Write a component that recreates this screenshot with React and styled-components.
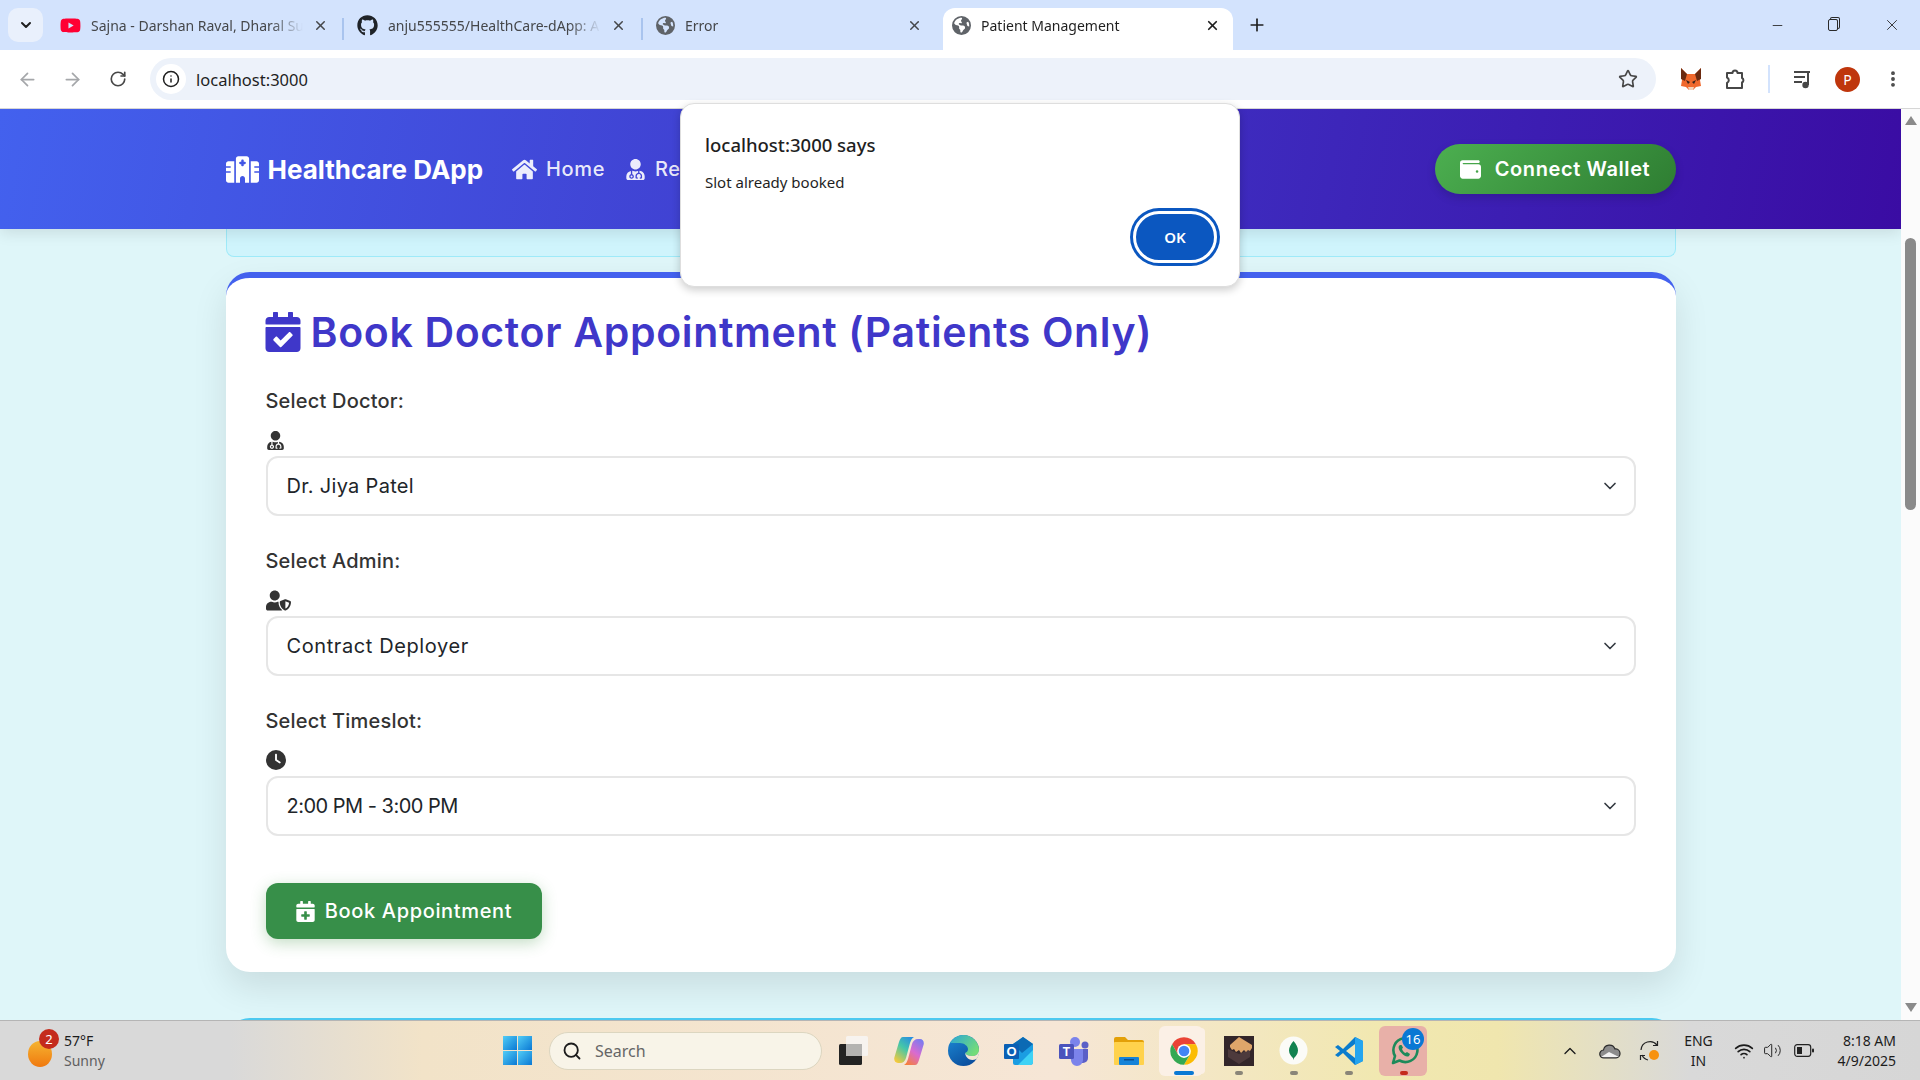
import React from "react";
import styled, { createGlobalStyle } from "styled-components";
import { ArrowLeft, ArrowRight, RotateCw, Info, Star, X, Plus, Minus, ChevronDown, ChevronUp, Search, EllipsisVertical, Wifi, Volume2 } from "lucide-react";
import { FaGithub, FaUserMd, FaUserShield, FaCalendarCheck, FaCalendarPlus, FaHome, FaYoutube } from "react-icons/fa";
import { FaHospital, FaClock, FaWallet, FaEarthAmericas } from "react-icons/fa6";

const POPPINS = `"Inter", "Liberation Sans", sans-serif`;
const SEGOE = `"Noto Sans", "Open Sans", sans-serif`;

const GlobalStyle = createGlobalStyle`
  html, body { margin: 0; padding: 0; width: 1920px; height: 1080px; overflow: hidden; }
  * { box-sizing: border-box; }
`;

const Screen = styled.div`
  position: relative;
  width: 1920px;
  height: 1080px;
  display: flex;
  flex-direction: column;
  overflow: hidden;
  font-family: ${SEGOE};
`;

/* browser chrome */
const TabStrip = styled.div`
  height: 50px;
  background: #d3e3fd;
  display: flex;
  align-items: flex-end;
  padding-left: 8px;
  flex-shrink: 0;
`;

const TabSearch = styled.div`
  width: 35px;
  height: 34px;
  margin: 0 4px 8px 0;
  border-radius: 10px;
  background: #e9f0fc;
  color: #1f1f1f;
  display: flex;
  align-items: center;
  justify-content: center;
`;

const Tab = styled.div`
  position: relative;
  width: ${({ $width }) => $width}px;
  height: 42px;
  display: flex;
  align-items: center;
  gap: 10px;
  padding: 0 ${({ $closeGap }) => $closeGap}px 8px ${({ $active }) => ($active ? 9 : 13)}px;
  color: ${({ $active }) => ($active ? "#1f1f1f" : "#45474a")};
  background: ${({ $active }) => ($active ? "#fff" : "transparent")};
  border-radius: 12px 12px 0 0;

  &::after {
    content: "";
    position: absolute;
    right: 0;
    top: 10px;
    height: 22px;
    width: 2px;
    background: ${({ $sep }) => ($sep ? "#a9c4ee" : "transparent")};
  }
`;

const TabTitle = styled.span`
  flex: 1;
  font-size: 14px;
  white-space: nowrap;
  overflow: hidden;
  mask-image: linear-gradient(to right, #000 85%, transparent 100%);
`;

const NewTab = styled.div`
  width: 36px;
  height: 42px;
  margin-left: 6px;
  padding-bottom: 8px;
  display: flex;
  align-items: center;
  justify-content: center;
  color: #1f1f1f;
`;

const WindowControls = styled.div`
  margin-left: auto;
  height: 50px;
  display: flex;
  align-items: center;
  color: #2a2a2a;
`;

const WindowButton = styled.div`
  width: 57px;
  height: 50px;
  display: flex;
  align-items: center;
  justify-content: center;
`;

const RestoreGlyph = styled.div`
  width: 10px;
  height: 12px;
  margin-right: 4px;
  border: 1.4px solid #2a2a2a;
  border-radius: 2px;
  box-shadow: 2px -2px 0 -1px #d3e3fd, 2px -2px 0 0 #2a2a2a;
`;

const Toolbar = styled.div`
  height: 59px;
  background: #fff;
  border-bottom: 1px solid #d6d6d6;
  border-radius: 12px 12px 0 0;
  display: flex;
  align-items: center;
  padding: 0 5px 0 5px;
  flex-shrink: 0;
`;

const ToolCell = styled.div`
  width: 45px;
  height: 42px;
  display: flex;
  align-items: center;
  justify-content: center;
  color: ${({ $dim }) => ($dim ? "#a5a7aa" : "#474747")};
  flex-shrink: 0;
`;

const UrlBar = styled.div`
  flex: 1;
  height: 42px;
  margin: 0 12px 0 10px;
  padding: 0 18px 0 6px;
  background: #edf2fa;
  border-radius: 21px;
  display: flex;
  align-items: center;
`;

const InfoBubble = styled.div`
  width: 30px;
  height: 30px;
  border-radius: 50%;
  background: #fff;
  color: #1f1f1f;
  display: flex;
  align-items: center;
  justify-content: center;
`;

const UrlText = styled.span`
  margin-left: 10px;
  flex: 1;
  font-size: 16.5px;
  color: #1f1f1f;
`;

const ToolSep = styled.div`
  width: 2px;
  height: 28px;
  margin: 0 10px;
  background: #d3e3fd;
`;

const Avatar = styled.div`
  width: 25px;
  height: 25px;
  border-radius: 50%;
  background: #bf360c;
  color: #fff;
  font-size: 14px;
  display: flex;
  align-items: center;
  justify-content: center;
`;

/* page */
const Viewport = styled.div`
  flex: 1;
  min-height: 0;
  display: flex;
`;

const Page = styled.main`
  flex: 1;
  min-width: 0;
  overflow: hidden;
  background: #dff6f9;
`;

const Scrollbar = styled.div`
  width: 19px;
  background: #fbfbfb;
  display: flex;
  flex-direction: column;
  align-items: center;
  padding: 7px 0 8px;
`;

const ScrollThumb = styled.div`
  width: 11px;
  height: 272px;
  margin: 113px 0 auto;
  border-radius: 6px;
  background: #8a8a8a;
`;

const Arrow = styled.div`
  width: 0;
  height: 0;
  border-left: 6px solid transparent;
  border-right: 6px solid transparent;
  ${({ $down }) =>
    $down ? "border-top: 9px solid #8a8a8a;" : "border-bottom: 9px solid #8a8a8a;"}
`;

const Navbar = styled.header`
  height: 120px;
  background: linear-gradient(100deg, #4361ee 0%, #3f37c9 50%, #3a0ca3 100%);
  box-shadow: 0 4px 14px rgba(0, 0, 0, 0.1);
  position: relative;
`;

const Container = styled.div`
  width: 1450px;
  margin: 0 auto;
`;

const NavInner = styled(Container)`
  height: 100%;
  display: flex;
  align-items: center;
`;

const Brand = styled.div`
  display: flex;
  align-items: center;
  gap: 9px;
  color: #fff;
  font-family: ${POPPINS};
  font-weight: 700;
  font-size: 26px;
  letter-spacing: 0;
  margin-right: 29px;
`;

const NavLink = styled.a`
  display: flex;
  align-items: center;
  gap: 9px;
  margin-right: 20px;
  color: rgba(255, 255, 255, 0.9);
  font-family: ${POPPINS};
  font-weight: 500;
  font-size: 20px;
  letter-spacing: 0.6px;
`;

const WalletButton = styled.button`
  margin-left: auto;
  width: 241px;
  height: 50px;
  border: none;
  border-radius: 25px;
  background: linear-gradient(135deg, #4caf50, #2e7d32);
  box-shadow: 0 4px 10px rgba(0, 0, 0, 0.15);
  color: #fff;
  font-family: ${POPPINS};
  font-weight: 600;
  font-size: 20px;
  letter-spacing: 0.6px;
  display: flex;
  align-items: center;
  justify-content: center;
  gap: 14px;
`;

const Alert = styled(Container)`
  height: 28px;
  background: #cff4fc;
  border: 1px solid #9eeaf9;
  border-top: none;
  border-radius: 0 0 8px 8px;
  margin-bottom: 15px;
`;

const Card = styled(Container)`
  height: 700px;
  padding: 28px 40px 33px;
  background: #fff;
  border-top: 6px solid #4361ee;
  border-radius: 24px;
  box-shadow: 0 15px 35px rgba(0, 0, 0, 0.1);
`;

const NextCard = styled(Container)`
  height: 40px;
  margin-top: 46px;
  background: #fff;
  border-top: 4px solid #4cc9f0;
  border-radius: 24px 24px 0 0;
`;

const Title = styled.h2`
  margin: 0 0 24px;
  height: 52px;
  display: flex;
  align-items: center;
  gap: 8px;
  color: #3f37c9;
  font-family: ${POPPINS};
  font-weight: 600;
  font-size: 41px;
  letter-spacing: 0.66px;
  white-space: nowrap;
`;

const TitleIcon = styled(FaCalendarCheck)`
  margin-left: -3px;
`;

const Field = styled.div`
  margin-bottom: 26px;
`;

const Label = styled.label`
  display: block;
  height: 38px;
  line-height: 38px;
  margin-bottom: 7px;
  color: #333;
  font-family: ${POPPINS};
  font-weight: 500;
  font-size: 20px;
  letter-spacing: 0.2px;
`;

const FieldIcon = styled.div`
  height: 29px;
  padding-bottom: 3px;
  display: flex;
  align-items: center;
  color: #333;
`;

const SelectWrap = styled.div`
  position: relative;
`;

const Select = styled.select`
  display: block;
  width: 100%;
  height: 60px;
  padding: 0 19px;
  appearance: none;
  background: #fff;
  border: 2px solid #e6e6e6;
  border-radius: 12px;
  color: #212529;
  font-family: ${POPPINS};
  font-size: 20px;
  letter-spacing: ${({ $spacing }) => $spacing}px;
`;

const Chevron = styled(ChevronDown)`
  position: absolute;
  right: 16px;
  top: 20px;
  color: #343a40;
  pointer-events: none;
`;

const BookButton = styled.button`
  margin-top: 47px;
  width: 276px;
  height: 56px;
  border: none;
  border-radius: 12px;
  background: #378f49;
  box-shadow: 0 4px 15px rgba(56, 142, 60, 0.3);
  color: #fff;
  font-family: ${POPPINS};
  font-weight: 500;
  font-size: 20px;
  letter-spacing: 0.65px;
  display: flex;
  align-items: center;
  justify-content: center;
  gap: 9px;
`;

/* alert() dialog */
const Dialog = styled.div`
  position: absolute;
  left: 680px;
  top: 103px;
  width: 560px;
  height: 184px;
  padding: 29px 23px 20px 24px;
  background: #fff;
  border: 1px solid #dedede;
  border-radius: 14px;
  box-shadow: 0 3px 8px rgba(0, 0, 0, 0.2);
  display: flex;
  flex-direction: column;
`;

const DialogTitle = styled.div`
  font-size: 18.5px;
  line-height: 24px;
  font-weight: 500;
  color: #1f1f1f;
`;

const DialogText = styled.div`
  margin-top: 15px;
  font-size: 15px;
  line-height: 20px;
  color: #1f1f1f;
`;

const DialogOk = styled.button`
  position: relative;
  margin: auto -4px 0 auto;
  width: 90px;
  height: 58px;
  padding: 0;
  border: none;
  border-radius: 29px;
  background: #0b57c0;
  color: #fff;
  font-family: ${SEGOE};
  font-size: 15px;
  font-weight: 600;

  &::after {
    content: "";
    position: absolute;
    inset: 3px;
    border-radius: 26px;
    border: 3px solid #fff;
  }
`;

/* windows taskbar */
const Taskbar = styled.footer`
  position: relative;
  height: 60px;
  flex-shrink: 0;
  display: flex;
  align-items: center;
  border-top: 1px solid #b5b5b5;
  background: linear-gradient(90deg, #d9d9d9 0%, #d9d9d9 12%, #f2e3c8 22%, #f6e6d6 55%, #f1e8b0 72%, #f0e6ae 78%, #d9d9d9 88%, #d6d6d6 100%);
  color: #1c1c1c;
`;

const Weather = styled.div`
  position: relative;
  width: 503px;
  padding-left: 64px;
  font-size: 14px;
  line-height: 20px;
  flex-shrink: 0;
`;

const Sunny = styled.div`
  color: #5f5f5f;
`;

const Sun = styled.div`
  position: absolute;
  left: 28px;
  top: 10px;
  width: 24px;
  height: 26px;
  border-radius: 50%;
  background: linear-gradient(180deg, #f5b431, #f0790f);
`;

const Badge = styled.div`
  position: absolute;
  left: ${({ $left }) => $left}px;
  top: ${({ $top }) => $top}px;
  width: ${({ $size }) => $size}px;
  height: ${({ $size }) => $size}px;
  border-radius: 50%;
  background: ${({ $color }) => $color};
  color: #fff;
  font-size: 13px;
  display: flex;
  align-items: center;
  justify-content: center;
`;

const SearchBox = styled.div`
  width: 273px;
  height: 38px;
  margin-left: 17px;
  padding-left: 12px;
  border-radius: 19px;
  background: #f8f4e8;
  border: 1px solid #dcd6c0;
  display: flex;
  align-items: center;
  gap: 13px;
  color: #666;
  font-size: 16px;
`;

const Apps = styled.div`
  display: flex;
  margin-left: 4px;
`;

const AppCell = styled.div`
  position: relative;
  width: 55px;
  height: 50px;
  display: flex;
  align-items: center;
  justify-content: center;

  &::before {
    content: "";
    position: absolute;
    top: 0;
    bottom: 0;
    left: 3px;
    right: ${({ $stack }) => ($stack ? 8 : 4)}px;
    border-radius: 6px;
    background: ${({ $tile }) => $tile || "transparent"};
    box-shadow: ${({ $stack }) => ($stack ? "4px 0 0 -2px #fbf0e6" : "none")};
  }

  & > svg {
    position: relative;
  }
`;

const Pip = styled.div`
  position: absolute;
  bottom: 1px;
  left: 50%;
  transform: translateX(-50%);
  width: ${({ $w }) => $w}px;
  height: 4px;
  border-radius: 2px;
  background: ${({ $color }) => $color};
`;

const Tray = styled.div`
  margin-left: auto;
  display: flex;
  align-items: center;
  padding-right: 24px;
  color: #1c1c1c;
`;

const TrayCell = styled.div`
  width: ${({ $w }) => $w || 40}px;
  display: flex;
  align-items: center;
  justify-content: center;
`;

const LangBox = styled.div`
  width: 57px;
  text-align: center;
  font-size: 14px;
  line-height: 20px;
`;

const Clock = styled.div`
  width: 71px;
  text-align: right;
  font-size: 14px;
  line-height: 20px;
`;

const ChromeLogo = ({ size }) => (
  <svg width={size} height={size} viewBox="0 0 48 48">
    <path d="M4.95 13A22 22 0 0 1 43.05 13H24L14.47 29.5z" fill="#ea4335" />
    <path d="M4.95 13A22 22 0 0 1 43.05 13H24L14.47 29.5z" fill="#fbbc04" transform="rotate(120 24 24)" />
    <path d="M4.95 13A22 22 0 0 1 43.05 13H24L14.47 29.5z" fill="#34a853" transform="rotate(240 24 24)" />
    <circle cx="24" cy="24" r="11" fill="#fff" />
    <circle cx="24" cy="24" r="8.5" fill="#4285f4" />
  </svg>
);

const Fox = () => (
  <svg width="22" height="24" viewBox="0 0 22 24">
    <path d="M1 1l6 6h8l6-6-1 12 1 6-5 1-3 3h-4l-3-3-5-1 1-6z" fill="#f0682c" />
    <path d="M1 1l6 6-2 7-4-2zM21 1l-6 6 2 7 4-2z" fill="#6b2a10" />
    <path d="M6 13l4 2-2 2zM16 13l-4 2 2 2z" fill="#33201a" />
    <path d="M8 20h6l-1 3H9z" fill="#f6d2b8" />
  </svg>
);

const ExtensionGlyph = () => (
  <svg width="22" height="22" viewBox="0 0 22 22" fill="none" stroke="#474747" strokeWidth="2" strokeLinejoin="round">
    <path d="M2 5h5.500a2.500 2.500 0 0 1 5 0H17v5a2.500 2.500 0 0 1 0 4.500V20H2v-5a3 3 0 0 0 0-5.500z" />
  </svg>
);

const MediaGlyph = () => (
  <svg width="20" height="20" viewBox="0 0 20 20" fill="#474747">
    <rect x="1" y="2" width="16" height="2" />
    <rect x="1" y="7" width="11" height="2" />
    <rect x="1" y="12" width="8" height="2" />
    <rect x="14" y="3" width="2" height="13" />
    <circle cx="12.5" cy="16" r="3.2" />
  </svg>
);

const WindowsLogo = () => (
  <svg width="29" height="29" viewBox="0 0 29 29">
    <defs>
      <linearGradient id="winA" x1="0" y1="0" x2="1" y2="1">
        <stop offset="0" stopColor="#52cdf6" />
        <stop offset="1" stopColor="#0a78d4" />
      </linearGradient>
    </defs>
    <rect x="0" y="0" width="14" height="14" fill="url(#winA)" />
    <rect x="15" y="0" width="14" height="14" fill="url(#winA)" />
    <rect x="0" y="15" width="14" height="14" fill="url(#winA)" />
    <rect x="15" y="15" width="14" height="14" fill="url(#winA)" />
  </svg>
);

const TaskView = () => (
  <svg width="30" height="30" viewBox="0 0 30 30">
    <rect x="0" y="8" width="23" height="21" rx="1.5" fill="#232323" />
    <rect x="7" y="0" width="22" height="20" rx="1.5" fill="#f6f4f1" opacity="0.92" />
    <rect x="7" y="8" width="16" height="12" fill="#b4b3b1" />
  </svg>
);

const Copilot = () => (
  <svg width="30" height="30" viewBox="0 0 30 30">
    <defs>
      <linearGradient id="copA" x1="0.8" y1="0" x2="0.2" y2="1">
        <stop offset="0" stopColor="#2a8fe0" />
        <stop offset="0.45" stopColor="#45c7a8" />
        <stop offset="1" stopColor="#f5c93c" />
      </linearGradient>
      <linearGradient id="copB" x1="0.8" y1="0" x2="0.2" y2="1">
        <stop offset="0" stopColor="#7a7bf0" />
        <stop offset="0.5" stopColor="#d96bd0" />
        <stop offset="1" stopColor="#f5803c" />
      </linearGradient>
    </defs>
    <path d="M9 1h11c-2 1-3 3-4 6l-4 15c-.8 3-3 5-6 5H4c-3 0-4.500-3-3.500-6L5 6c1-3 2-5 4-5z" fill="url(#copA)" />
    <path d="M21 29H10c2-1 3-3 4-6l4-15c.8-3 3-5 6-5h2c3 0 4.500 3 3.500 6L25 24c-1 3-2 5-4 5z" fill="url(#copB)" />
  </svg>
);

const Edge = () => (
  <svg width="31" height="31" viewBox="0 0 31 31">
    <defs>
      <linearGradient id="edgeA" x1="0" y1="0" x2="1" y2="0.6">
        <stop offset="0" stopColor="#2aa6d8" />
        <stop offset="1" stopColor="#74dc78" />
      </linearGradient>
      <linearGradient id="edgeB" x1="0" y1="0" x2="0.6" y2="1">
        <stop offset="0" stopColor="#1d8ad6" />
        <stop offset="1" stopColor="#0b4f9e" />
      </linearGradient>
    </defs>
    <circle cx="15.5" cy="15.5" r="15.5" fill="url(#edgeB)" />
    <path d="M2 8C5 3 10 0 15.500 0 24 0 31 7 31 15c0 4-3 6-7 6-3 0-6-1-7-3 2-1 3-2 3-4 0-3-4-6-8-6-4 0-8 0-10 0z" fill="url(#edgeA)" />
    <path d="M17 18c1 2 4 3 7 3 4 0 6-2 7-5 .5 3-1 6-2.500 8-5 2-10 1-11.500-6z" fill="#f5e6d3" />
  </svg>
);

const Outlook = () => (
  <svg width="30" height="30" viewBox="0 0 30 30">
    <path d="M9 8l10-7 10 7v18a3 3 0 0 1-3 3H11a2 2 0 0 1-2-2z" fill="#1b9de2" />
    <path d="M14 29l15-15v12a3 3 0 0 1-3 3z" fill="#3fd2f5" />
    <path d="M9 8l10-7 10 7-11 9z" fill="#0b6ab4" />
    <rect x="0" y="8" width="15" height="15" rx="1" fill="#0a5fb4" />
    <text x="7.5" y="20" textAnchor="middle" fontSize="13" fontWeight="700" fill="#fff" fontFamily="Liberation Sans">O</text>
  </svg>
);

const Teams = () => (
  <svg width="30" height="30" viewBox="0 0 30 30">
    <circle cx="16" cy="6" r="5" fill="#7b83eb" />
    <circle cx="26" cy="9" r="3.500" fill="#5b5fc7" />
    <path d="M20 13h9v9a5 5 0 0 1-5 5h-4z" fill="#5b5fc7" />
    <path d="M9 13h15v11a6 6 0 0 1-12 0z" fill="#7b83eb" />
    <rect x="0" y="8" width="15" height="15" rx="1.500" fill="#4b53bc" />
    <text x="7.5" y="20" textAnchor="middle" fontSize="12" fontWeight="700" fill="#fff" fontFamily="Liberation Sans">T</text>
  </svg>
);

const Folder = () => (
  <svg width="30" height="28" viewBox="0 0 30 28">
    <path d="M0 2a2 2 0 0 1 2-2h9l3 3h14a2 2 0 0 1 2 2v4H0z" fill="#e3a008" />
    <rect x="0" y="5" width="30" height="23" rx="1" fill="#ffd24c" />
    <rect x="5" y="20" width="20" height="8" rx="1" fill="#1583d8" />
    <rect x="10" y="22" width="10" height="1.500" fill="#0b4f8f" />
  </svg>
);

const Sandbox = () => (
  <svg width="30" height="30" viewBox="0 0 30 30">
    <rect width="30" height="30" fill="#33262a" />
    <path d="M4 13l11 5 11-5v8l-11 7-11-7z" fill="#4d3a3c" />
    <path d="M15 1l13 8v3l-2 3-2-1-2 2-2-2-3 3-2-3-3 2-2-3-2 1-2-3V9z" fill="#dea56a" />
  </svg>
);

const Compass = () => (
  <svg width="29" height="29" viewBox="0 0 29 29">
    <circle cx="14.500" cy="14.500" r="14" fill="#fbfbf7" />
    <path d="M14.500 5c3 3.500 4.500 6.500 4.500 9.500 0 3.500-2.500 6-4 7.500l-.5 2-.5-2c-1.500-1.500-4-4-4-7.500C10 11.500 11.500 8.500 14.500 5z" fill="#12824f" />
  </svg>
);

const VsCode = () => (
  <svg width="30" height="30" viewBox="0 0 30 30">
    <path d="M21 1l8 4v20l-8 4L9 17l-5 4-3-2 5-4-5-4 3-2 5 4z" fill="#0a7ccd" />
    <path d="M21 1l8 4v20l-8 4z" fill="#25a5ef" />
    <path d="M21 8l-9 7 9 7z" fill="#f0e8b8" />
  </svg>
);

const WhatsApp = () => (
  <svg width="30" height="30" viewBox="0 0 30 30" fill="none">
    <path d="M4 27l2-7a12 12 0 1 1 4.500 4.500z" stroke="#1d8a5a" strokeWidth="2.600" strokeLinejoin="round" />
    <path d="M11 9c-2 1-2 4 1 7.500s6 5 8 3.500l1-2-3-2-1.500 1c-1.500-.5-3-2.500-3.500-4l1-1.500-1.500-2.500z" fill="#1d8a5a" />
  </svg>
);

const Cloud = () => (
  <svg width="22" height="16" viewBox="0 0 22 16">
    <path d="M5 15a4 4 0 0 1-.5-8A6 6 0 0 1 16 6a4.500 4.500 0 0 1 1 9z" fill="#8c8c8c" stroke="#2a2a2a" strokeWidth="1.200" />
    <path d="M2 14l8-5 10 5z" fill="#f2f2f2" />
  </svg>
);

const SyncBadge = () => (
  <svg width="22" height="22" viewBox="0 0 22 22" fill="none" stroke="#222" strokeWidth="1.200">
    <path d="M2 10a9 9 0 0 1 16-5" />
    <path d="M18.500 1v4.500H14" />
    <path d="M3 15a9 9 0 0 0 6 5" />
    <path d="M1.500 20v-4.500H6" />
    <circle cx="15" cy="15" r="5" fill="#f7920f" stroke="none" />
  </svg>
);

const Battery = () => (
  <svg width="20" height="13" viewBox="0 0 20 13" fill="none">
    <rect x="0.700" y="0.700" width="16" height="11.600" rx="2.500" stroke="#222" strokeWidth="1.200" />
    <rect x="3" y="3" width="5" height="7" fill="#222" />
    <rect x="18" y="4.500" width="2" height="4" rx="1" fill="#222" />
  </svg>
);

const taskApps = [
  { icon: <TaskView /> },
  { icon: <Copilot /> },
  { icon: <Edge /> },
  { icon: <Outlook /> },
  { icon: <Teams /> },
  { icon: <Folder /> },
  { icon: <ChromeLogo size={30} />, tile: "#fbf0e6", stack: true, pip: "#0a78d4", pipW: 20 },
  { icon: <Sandbox />, pip: "#8a8578", pipW: 8 },
  { icon: <Compass />, pip: "#8a8578", pipW: 8 },
  { icon: <VsCode />, pip: "#8a8578", pipW: 8 },
  { icon: <WhatsApp />, tile: "#e8b0a8", pip: "#c42b1c", pipW: 8, badge: "16" },
];

const formFields = [
  { label: "Select Doctor:", icon: <FaUserMd size={19} />, value: "Dr. Jiya Patel", spacing: 0.3 },
  { label: "Select Admin:", icon: <FaUserShield size={25} />, value: "Contract Deployer", spacing: 0.6 },
  { label: "Select Timeslot:", icon: <FaClock size={20} />, value: "2:00 PM - 3:00 PM", spacing: -0.5 },
];

const App = () => {
  return (
    <Screen>
      <GlobalStyle />
      <TabStrip>
        <TabSearch><ChevronDown size={16} strokeWidth={3} /></TabSearch>
        <Tab $width={297} $closeGap={16} $sep>
          <FaYoutube size={21} color="#ff0033" />
          <TabTitle>Sajna - Darshan Raval, Dharal Surelia</TabTitle>
          <X size={15} strokeWidth={2.4} />
        </Tab>
        <Tab $width={299} $closeGap={17} $sep>
          <FaGithub size={21} color="#1f2328" />
          <TabTitle>anju555555/HealthCare-dApp: A decentralized</TabTitle>
          <X size={15} strokeWidth={2.4} />
        </Tab>
        <Tab $width={300} $closeGap={21}>
          <FaEarthAmericas size={19} color="#5f6368" />
          <TabTitle>Error</TabTitle>
          <X size={15} strokeWidth={2.4} />
        </Tab>
        <Tab $width={290} $closeGap={13} $active>
          <FaEarthAmericas size={19} color="#5f6368" />
          <TabTitle>Patient Management</TabTitle>
          <X size={15} strokeWidth={2.8} />
        </Tab>
        <NewTab><Plus size={20} strokeWidth={2} /></NewTab>
        <WindowControls>
          <WindowButton><Minus size={15} strokeWidth={1.4} /></WindowButton>
          <WindowButton><RestoreGlyph /></WindowButton>
          <WindowButton><X size={18} strokeWidth={1.2} /></WindowButton>
        </WindowControls>
      </TabStrip>

      <Toolbar>
        <ToolCell $dim><ArrowLeft size={21} /></ToolCell>
        <ToolCell $dim><ArrowRight size={21} /></ToolCell>
        <ToolCell><RotateCw size={18} strokeWidth={2.2} /></ToolCell>
        <UrlBar>
          <InfoBubble><Info size={18} strokeWidth={2} /></InfoBubble>
          <UrlText>localhost:3000</UrlText>
          <Star size={20} strokeWidth={2} color="#474747" />
        </UrlBar>
        <ToolCell><Fox /></ToolCell>
        <ToolCell><ExtensionGlyph /></ToolCell>
        <ToolSep />
        <ToolCell><MediaGlyph /></ToolCell>
        <ToolCell><Avatar>P</Avatar></ToolCell>
        <ToolCell><EllipsisVertical size={20} strokeWidth={2.6} color="#474747" /></ToolCell>
      </Toolbar>

      <Viewport>
        <Page>
          <Navbar>
            <NavInner>
              <Brand><FaHospital size={33} />Healthcare DApp</Brand>
              <NavLink><FaHome size={25} />Home</NavLink>
              <NavLink><FaUserMd size={21} />Register</NavLink>
              <WalletButton><FaWallet size={21} />Connect Wallet</WalletButton>
            </NavInner>
          </Navbar>
          <Alert />
          <Card>
            <Title><TitleIcon size={40} />Book Doctor Appointment (Patients Only)</Title>
            {formFields.map((field) => (
              <Field key={field.label}>
                <Label>{field.label}</Label>
                <FieldIcon>{field.icon}</FieldIcon>
                <SelectWrap>
                  <Select defaultValue={field.value} $spacing={field.spacing}>
                    <option>{field.value}</option>
                  </Select>
                  <Chevron size={20} strokeWidth={2} />
                </SelectWrap>
              </Field>
            ))}
            <BookButton><FaCalendarPlus size={21} />Book Appointment</BookButton>
          </Card>
          <NextCard />
        </Page>
        <Scrollbar>
          <Arrow />
          <ScrollThumb />
          <Arrow $down />
        </Scrollbar>
      </Viewport>

      <Taskbar>
        <Weather>
          <Sun />
          <Badge $left={39} $top={-2} $size={20} $color="#c42b1c">2</Badge>
          <div>57°F</div>
          <Sunny>Sunny</Sunny>
        </Weather>
        <WindowsLogo />
        <SearchBox><Search size={20} strokeWidth={2.2} color="#1c1c1c" />Search</SearchBox>
        <Apps>
          {taskApps.map((app, i) => (
            <AppCell key={i} $tile={app.tile} $stack={app.stack}>
              {app.icon}
              {app.pip && <Pip $w={app.pipW} $color={app.pip} />}
              {app.badge && <Badge $left={26} $top={2} $size={22} $color="#0a78d4">{app.badge}</Badge>}
            </AppCell>
          ))}
        </Apps>
        <Tray>
          <TrayCell><ChevronUp size={20} strokeWidth={1.6} /></TrayCell>
          <TrayCell><Cloud /></TrayCell>
          <TrayCell><SyncBadge /></TrayCell>
          <LangBox>ENG<br />IN</LangBox>
          <TrayCell $w={34}><Wifi size={20} strokeWidth={2} /></TrayCell>
          <TrayCell $w={22}><Volume2 size={19} strokeWidth={1.2} /></TrayCell>
          <TrayCell $w={42}><Battery /></TrayCell>
          <Clock>8:18 AM<br />4/9/2025</Clock>
        </Tray>
      </Taskbar>

      <Dialog>
        <DialogTitle>localhost:3000 says</DialogTitle>
        <DialogText>Slot already booked</DialogText>
        <DialogOk>OK</DialogOk>
      </Dialog>
    </Screen>
  );
};

export default App;
